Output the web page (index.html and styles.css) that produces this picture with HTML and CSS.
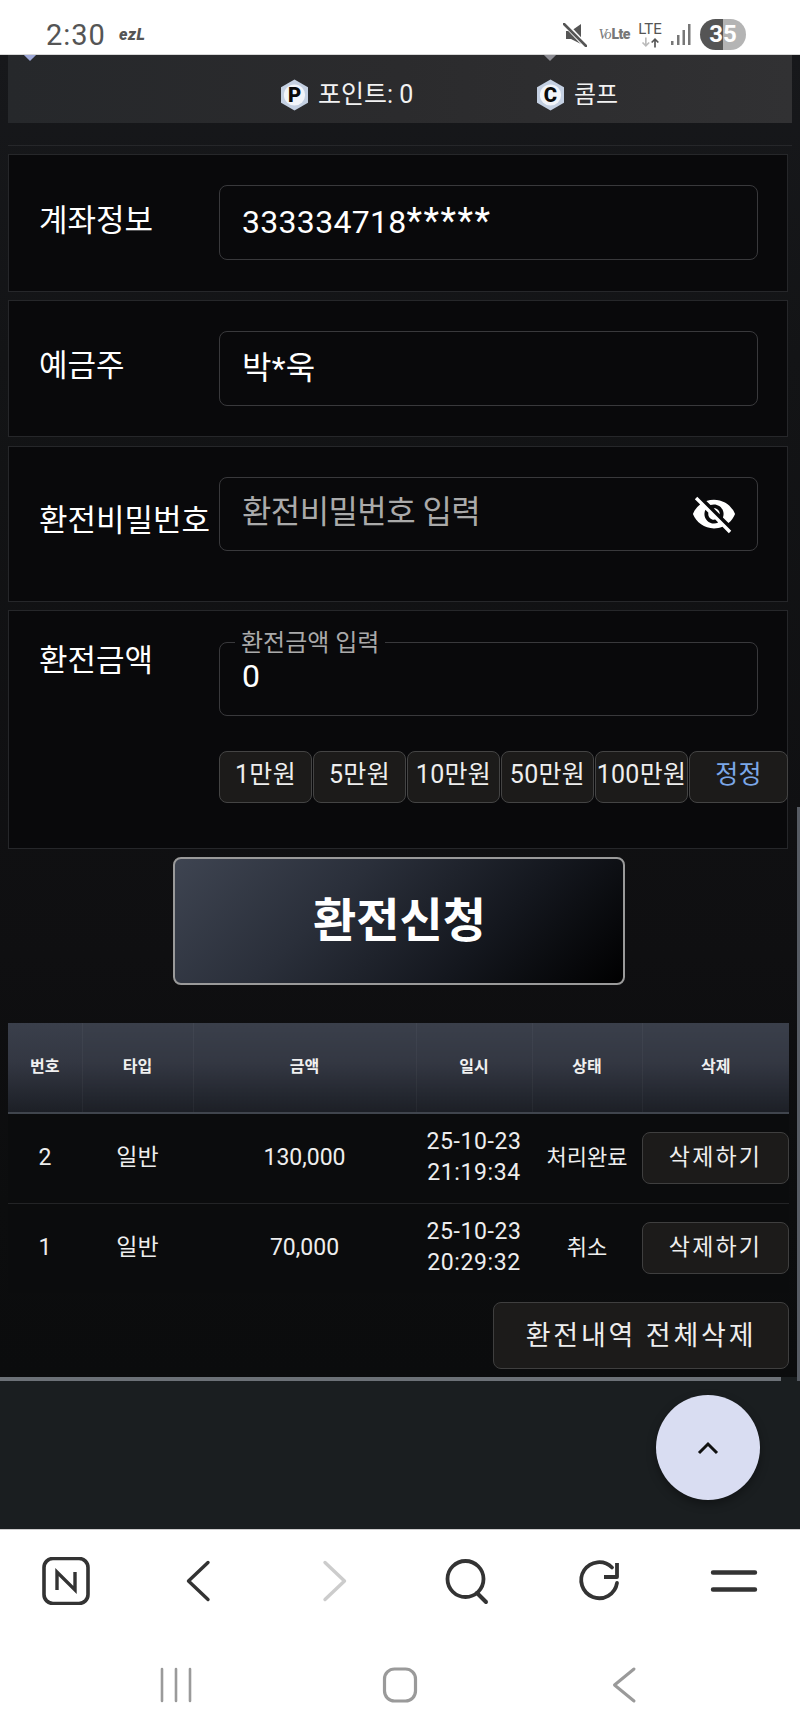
FILE: index.html
```html
<!DOCTYPE html>
<html lang="ko">
<head>
<meta charset="utf-8">
<title>환전신청</title>
<link rel="stylesheet" href="styles.css">
</head>
<body>
<div class="screen">
  <header class="status">
    <div class="status-left"><span class="clock">2:30</span><span class="carrier">ezL</span></div>
    <div class="status-right">
      <svg class="ic-mute" viewBox="0 0 24 24"><path d="M3 8h5l10-7v20L8 16H3z" fill="#555"/><path d="M2 1l21 22" stroke="#fff" stroke-width="5"/><path d="M1 1l22 22" stroke="#555" stroke-width="2.600" stroke-linecap="round"/></svg>
      <span class="volte"><i>Vo</i><b>Lte</b></span>
      <span class="lte"><span class="lte-t">LTE</span><svg class="lte-a" viewBox="0 0 24 12"><path d="M7 0v10M3 6l4 4 4-4" stroke="#bbb" stroke-width="2" fill="none"/><path d="M18 12V2M14 6l4-4 4 4" stroke="#555" stroke-width="2" fill="none"/></svg></span>
      <svg class="ic-signal" viewBox="0 0 20 22"><g fill="#777"><rect x="0" y="17" width="2.500" height="4"/><rect x="6" y="11" width="2.500" height="10"/><rect x="11.500" y="6" width="2.500" height="15"/><rect x="17" y="0" width="2.500" height="21"/></g></svg>
      <span class="battery">35</span>
    </div>
  </header>

  <main class="page">
    <span class="diamond diamond-a"></span>
    <span class="diamond diamond-b"></span>
    <section class="wallet">
      <div class="wallet-item wallet-p">
        <svg class="hex" viewBox="0 0 28 32"><path d="M14 0l14 8v16l-14 8-14-8V8z" fill="#c4d0e2"/><circle cx="14" cy="16" r="11" fill="#f2f5fa"/><text x="14" y="23" text-anchor="middle" class="hex-t">P</text></svg>
        <span>포인트: 0</span>
      </div>
      <div class="wallet-item">
        <svg class="hex" viewBox="0 0 28 32"><path d="M14 0l14 8v16l-14 8-14-8V8z" fill="#c4d0e2"/><circle cx="14" cy="16" r="11" fill="#f2f5fa"/><text x="14" y="23" text-anchor="middle" class="hex-t">C</text></svg>
        <span class="wallet-c">콤프</span>
      </div>
    </section>
    <div class="rule"></div>

    <section class="card card-a">
      <div class="card-label label-a">계좌정보</div>
      <div class="card-body"><div class="field field-tall"><span class="field-text">333334718<span class="mask">*****</span></span></div></div>
    </section>

    <section class="card card-b">
      <div class="card-label label-b">예금주</div>
      <div class="card-body"><div class="field field-tall"><span class="field-text">박*욱</span></div></div>
    </section>

    <section class="card card-c">
      <div class="card-label label-c">환전비밀번호</div>
      <div class="card-body">
        <div class="field field-pw">
          <span class="field-hint">환전비밀번호 입력</span>
          <svg class="ic-eye" viewBox="0 0 24 24"><path fill="#fff" d="M12 7c2.76 0 5 2.24 5 5 0 .65-.13 1.26-.36 1.83l2.92 2.92c1.51-1.26 2.7-2.89 3.43-4.75-1.73-4.39-6-7.5-11-7.5-1.4 0-2.74.25-3.98.7l2.16 2.16C10.74 7.13 11.35 7 12 7zM2 4.27l2.28 2.28.46.46C3.08 8.3 1.78 10.02 1 12c1.73 4.39 6 7.5 11 7.5 1.55 0 3.03-.3 4.38-.84l.42.42L19.73 22 21 20.73 3.27 3 2 4.27zM7.53 9.8l1.55 1.55c-.05.21-.08.43-.08.65 0 1.66 1.34 3 3 3 .22 0 .44-.03.65-.08l1.55 1.55c-.67.33-1.41.53-2.2.53-2.76 0-5-2.24-5-5 0-.79.2-1.53.53-2.2zm4.31-.78l3.15 3.15.02-.16c0-1.66-1.34-3-3-3l-.17.01z"/></svg>
        </div>
      </div>
    </section>

    <section class="card card-d">
      <div class="card-label label-d">환전금액</div>
      <div class="card-body">
        <div class="field field-amount">
          <span class="legend">환전금액 입력</span>
          <span class="field-text">0</span>
        </div>
        <div class="chips">
          <button class="chip">1만원</button>
          <button class="chip">5만원</button>
          <button class="chip">10만원</button>
          <button class="chip">50만원</button>
          <button class="chip">100만원</button>
          <button class="chip chip-fix">정정</button>
        </div>
      </div>
    </section>

    <div class="submit-wrap"><button class="submit">환전신청</button></div>

    <table class="history">
      <colgroup><col class="c1"><col class="c2"><col class="c3"><col class="c4"><col class="c5"><col class="c6"></colgroup>
      <thead>
        <tr><th>번호</th><th>타입</th><th>금액</th><th>일시</th><th>상태</th><th>삭제</th></tr>
      </thead>
      <tbody>
        <tr>
          <td>2</td><td>일반</td><td>130,000</td><td class="cell-date">25-10-23<br>21:19:34</td><td class="cell-state">처리완료</td>
          <td class="cell-del"><button class="del">삭제하기</button></td>
        </tr>
        <tr>
          <td>1</td><td>일반</td><td>70,000</td><td class="cell-date">25-10-23<br>20:29:32</td><td class="cell-state">취소</td>
          <td class="cell-del"><button class="del">삭제하기</button></td>
        </tr>
      </tbody>
    </table>

    <div class="bulk-wrap"><button class="bulk">환전내역 전체삭제</button></div>

    <div class="hbar"></div>
    <div class="vbar"></div>
    <button class="fab" aria-label="맨 위로"><svg viewBox="0 0 24 14"><path d="M3 12L12 3l9 9" fill="none" stroke="#111" stroke-width="3"/></svg></button>
  </main>

  <nav class="toolbar">
    <svg class="tool" viewBox="0 0 48 48"><rect x="2" y="1.500" width="44" height="45" rx="9" fill="none" stroke="#333" stroke-width="3.600"/><path d="M15 33V15l18 18V15" fill="none" stroke="#333" stroke-width="3.400"/></svg>
    <svg class="tool" viewBox="0 0 48 48"><path d="M32 5.500L12.500 24 32 42.500" fill="none" stroke="#333" stroke-width="3.400" stroke-linecap="round" stroke-linejoin="round"/></svg>
    <svg class="tool" viewBox="0 0 48 48"><path d="M16 5.500L35.500 24 16 42.500" fill="none" stroke="#ccc" stroke-width="3.400" stroke-linecap="round" stroke-linejoin="round"/></svg>
    <svg class="tool" viewBox="0 0 48 48"><circle cx="22.500" cy="22" r="18" fill="none" stroke="#333" stroke-width="3.800"/><path d="M34 36l9 9" stroke="#333" stroke-width="4" stroke-linecap="round"/></svg>
    <svg class="tool" viewBox="0 0 48 48"><path d="M41 26A18 18 0 1 1 36 10.500" fill="none" stroke="#333" stroke-width="3.800" stroke-linecap="round"/><path d="M41 6v14H28" fill="none" stroke="#333" stroke-width="3.800" stroke-linejoin="round"/></svg>
    <svg class="tool" viewBox="0 0 48 48"><path d="M3 15.500h42M3 32.500h42" stroke="#333" stroke-width="4.400" stroke-linecap="round"/></svg>
  </nav>
  <nav class="sysnav">
    <svg class="sys" viewBox="0 0 48 48"><path d="M10 8v32M24 8v32M38 8v32" stroke="#9a9a9a" stroke-width="2.600" stroke-linecap="round"/></svg>
    <svg class="sys" viewBox="0 0 48 48"><rect x="8.500" y="8" width="31" height="32" rx="10" fill="none" stroke="#9a9a9a" stroke-width="3.200"/></svg>
    <svg class="sys" viewBox="0 0 48 48"><path d="M34 8L14.500 24 34 40" fill="none" stroke="#9a9a9a" stroke-width="3" stroke-linecap="round" stroke-linejoin="round"/></svg>
  </nav>
</div>
</body>
</html>
```
FILE: styles.css
```css
* { box-sizing: border-box; }
html, body { margin: 0; padding: 0; }
body {
  width: 800px;
  height: 1733px;
  overflow: hidden;
  background: #fff;
  font-family: Roboto, "Noto Sans CJK KR", "Noto Sans", sans-serif;
}
button { font-family: inherit; cursor: pointer; }
.screen { display: flex; flex-direction: column; width: 800px; height: 1733px; }

/* status bar */
.status {
  flex: none;
  height: 55px;
  background: #fff;
  border-bottom: 1px solid #d8d8d8;
  display: flex;
  justify-content: space-between;
  align-items: center;
  padding: 15px 54px 0 46px;
}
.status-left { display: flex; align-items: center; gap: 13px; }
.clock { font-size: 29px; line-height: 36px; color: #555; letter-spacing: 1px; }
.carrier { font-size: 16px; font-weight: 900; font-style: italic; color: #555; letter-spacing: .5px; }
.status-right { display: flex; align-items: center; }
.ic-mute { width: 24px; height: 24px; margin-right: 11px; }
.volte { display: flex; align-items: baseline; color: #777; margin-right: 7px; }
.volte i { font-family: "Liberation Serif", serif; font-size: 14px; letter-spacing: -1px; margin-right: 1px; }
.volte b { font-size: 14px; font-weight: 900; letter-spacing: -.5px; }
.lte { display: flex; flex-direction: column; align-items: center; width: 26px; margin-right: 8px; }
.lte-t { font-size: 15px; line-height: 15px; color: #555; }
.lte-a { width: 20px; height: 11px; }
.ic-signal { width: 20px; height: 22px; margin-right: 9px; }
.battery {
  width: 46px;
  height: 31px;
  border-radius: 16px;
  background: linear-gradient(90deg, #555 0 50%, #b4b4b4 50% 100%);
  color: #fff;
  font-size: 24px;
  font-weight: 700;
  line-height: 31px;
  text-align: center;
}

/* page */
.page {
  position: relative;
  flex: none;
  height: 1474px;
  overflow: hidden;
  background: linear-gradient(180deg, #17181b 0, #131416 300px, #0f0f11 900px, #0c0d0e 1150px, #0b0c0d 1322px, #1a1e20 1322px);
}
.diamond { position: absolute; top: -6px; width: 10px; height: 10px; transform: rotate(45deg); }
.diamond-a { left: 25px; background: #9fa9d8; }
.diamond-b { left: 545px; background: #8d8d94; }
.wallet {
  height: 68px;
  margin: 0 8px;
  background: linear-gradient(90deg, #26282b, #2b2b2d 50%, #313133);
  display: flex;
  padding-left: 273px;
  padding-top: 24px;
  align-items: flex-start;
}
.wallet-item { display: flex; align-items: center; gap: 10px; color: #f2f2f2; font-size: 25px; line-height: 32px; }
.wallet-p { width: 256px; }
.wallet-c { font-size: 24px; }
.hex { width: 27px; height: 32px; flex: none; }
.hex-t { font-family: Roboto, sans-serif; font-weight: 900; font-size: 21px; fill: #0a0a0a; }
.rule { height: 1px; margin: 22px 8px 8px; background: #26272a; }

/* cards */
.card {
  display: flex;
  margin: 0 12px 8px 8px;
  border: 1px solid #26272a;
  background: #09090b;
  padding-left: 30px;
}
.card-a { height: 138px; padding-top: 30px; }
.card-b { height: 137px; padding-top: 30px; margin-bottom: 9px; }
.card-c { height: 156px; padding-top: 30px; }
.card-d { height: 239px; padding-top: 31px; }
.card-label { width: 180px; flex: none; color: #fff; font-size: 31px; line-height: 40px; white-space: nowrap; }
.label-a { margin-top: 16px; }
.label-b { margin-top: 15px; }
.label-c { margin-top: 24px; }
.label-d { margin-top: -1px; }
.card-body { width: 539px; flex: none; }
.field {
  position: relative;
  height: 74px;
  width: 539px;
  border: 1px solid #39393c;
  border-radius: 8px;
  padding-left: 22px;
  display: flex;
  align-items: center;
}
.field-tall { height: 75px; }
.field-text { color: #fff; font-size: 32px; line-height: 40px; margin-top: -2px; letter-spacing: .3px; }
.mask { font-size: 36px; letter-spacing: 1.500px; line-height: 30px; }
.field-pw { justify-content: space-between; padding-right: 20px; }
.field-hint { color: #aaa; font-size: 32px; line-height: 40px; margin-top: -5px; letter-spacing: -.6px; }
.ic-eye { width: 46px; height: 46px; flex: none; }
.field-amount { align-items: flex-start; padding-top: 15px; }
.legend {
  position: absolute;
  left: 15px;
  top: -15px;
  padding: 0 6px;
  background: #09090b;
  color: #aaa;
  font-size: 24px;
  line-height: 30px;
  white-space: nowrap;
}
.chips { display: flex; margin-top: 35px; width: 570px; gap: 1px; }
.chip {
  flex: none;
  width: 93px;
  height: 52px;
  padding: 0 0 10px;
  background: #1c1b1a;
  border: 1px solid #444;
  border-radius: 8px;
  color: #eee;
  font-size: 25px;
  letter-spacing: .3px;
  white-space: nowrap;
}
.chip-fix { width: 99px; color: #7ba7e8; }

/* submit */
.submit-wrap { display: flex; justify-content: center; margin: 8px 0 38px; padding-right: 3px; }
.submit {
  width: 452px;
  height: 128px;
  padding: 0 0 10px 2px;
  border: 2px solid #9a9a9a;
  border-radius: 8px;
  background: linear-gradient(135deg, #3e4451 0, #2a2f3a 35%, #14171e 68%, #000 100%);
  color: #fff;
  font-size: 47px;
  font-weight: 700;
}

/* table */
.history {
  table-layout: fixed;
  width: 781px;
  margin-left: 8px;
  border-collapse: collapse;
  color: #eee;
}
.c1 { width: 74px; }
.c2 { width: 111px; }
.c3 { width: 223px; }
.c4 { width: 116px; }
.c5 { width: 110px; }
.c6 { width: 147px; }
.history th {
  height: 90px;
  padding: 0 0 6px;
  background: linear-gradient(180deg, #3a3f4b 0, #333742 45%, #1c1f26 100%);
  border-bottom: 2px solid #40454d;
  border-right: 1px solid rgba(255,255,255,.04);
  font-size: 16px;
  font-weight: 700;
  color: #f0f0f0;
}
.history th:last-child { border-right: 0; }
.history td {
  height: 90px;
  padding: 0 0 2px;
  text-align: center;
  font-size: 23px;
  line-height: 31px;
  background: #0b0c0d;
  border-bottom: 1px solid #232426;
  white-space: nowrap;
}
.history td.cell-date { letter-spacing: .6px; }
.history td.cell-state { font-size: 22px; }
.history td.cell-del { padding: 0; }
.history tbody tr:last-child td { border-bottom: 0; }
.del {
  display: block;
  width: 147px;
  height: 52px;
  padding: 0 0 6px;
  background: #1c1b1a;
  border: 1px solid #3f3f3f;
  border-radius: 8px;
  color: #eee;
  font-size: 23px;
  letter-spacing: 2.200px;
}
.bulk-wrap {
  display: flex;
  justify-content: flex-end;
  width: 781px;
  margin-left: 8px;
  padding-top: 9px;
  height: 83px;
}
.bulk {
  width: 296px;
  height: 67px;
  padding: 0 0 4px;
  background: #1c1b1a;
  border: 1px solid #3f3f3f;
  border-radius: 8px;
  color: #eee;
  font-size: 27px;
  letter-spacing: 2.800px;
}
.hbar { position: absolute; left: 0; top: 1322px; width: 781px; height: 4px; background: #6c7177; }
.vbar { position: absolute; right: 0; top: 752px; width: 3px; height: 574px; background: #565b63; }
.fab {
  position: absolute;
  left: 656px;
  top: 1340px;
  width: 104px;
  height: 105px;
  border: 0;
  padding: 0;
  border-radius: 50%;
  background: #d9ddf2;
  box-shadow: 0 4px 10px rgba(0,0,0,.35);
  display: flex;
  align-items: center;
  justify-content: center;
}
.fab svg { width: 24px; height: 14px; }

/* browser chrome */
.toolbar {
  flex: none;
  height: 102px;
  background: #fff;
  border-top: 1px solid #ccc;
  display: flex;
  justify-content: space-between;
  align-items: center;
  padding: 0 42px;
}
.tool { width: 48px; height: 48px; }
.sysnav {
  flex: none;
  height: 102px;
  background: #fff;
  display: flex;
  justify-content: center;
  align-items: center;
  gap: 176px;
  padding-top: 5px;
}
.sys { width: 48px; height: 48px; }
```
